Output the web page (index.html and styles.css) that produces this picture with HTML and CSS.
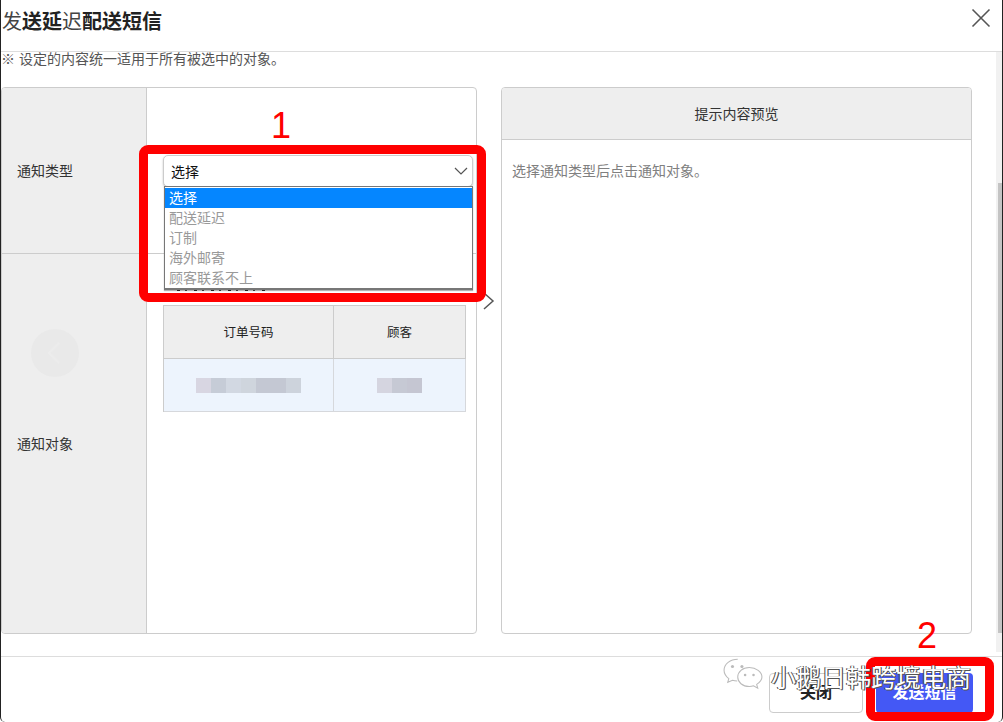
FILE: index.html
```html
<!DOCTYPE html>
<html lang="zh">
<head>
<meta charset="utf-8">
<title>发送延迟配送短信</title>
<link rel="stylesheet" href="styles.css">
</head>
<body>
<div class="modal">
  <header class="head">
    <h1 class="title"><span class="thin">发</span>送延<span class="thin">迟</span>配送短信</h1>
    <svg class="close" width="20" height="20" viewBox="0 0 20 20"><path d="M1.500 1.500L18.500 18.500M18.500 1.500L1.500 18.500" stroke="#555" stroke-width="1.600" fill="none"/></svg>
  </header>
  <main class="content">
    <p class="notice">※ 设定的内容统一适用于所有被选中的对象。</p>
    <div class="panels">
      <section class="form">
        <div class="row row-type">
          <div class="label">通知类型</div>
          <div class="cell cell-type">
            <div class="select">
              <span>选择</span>
              <svg width="14" height="8" viewBox="0 0 14 8"><path d="M1 1L7 7L13 1" stroke="#555" stroke-width="1.200" fill="none"/></svg>
            </div>
          </div>
        </div>
        <div class="row row-target">
          <div class="label label-target">通知对象</div>
          <div class="cell cell-target">
            <div class="count"><div class="glimpse"></div></div>
            <div class="table">
              <div class="th">订单号码</div>
              <div class="th">顾客</div>
              <div class="td"><span class="blur blur-a"><i></i><i></i><i></i><i></i><i></i><i></i><i></i></span></div>
              <div class="td"><span class="blur blur-b"><i></i><i></i><i></i></span></div>
            </div>
          </div>
        </div>
      </section>
      <div class="gutter">
        <svg width="14" height="20" viewBox="0 0 14 20"><path d="M2 2L11 10L2 18" stroke="#555" stroke-width="1.500" fill="none"/></svg>
      </div>
      <section class="preview">
        <div class="preview-head">提示内容预览</div>
        <p class="preview-body">选择通知类型后点击通知对象。</p>
      </section>
    </div>
    <div class="scrollbar"><div class="thumb"></div></div>
  </main>
  <footer class="foot">
    <button class="btn btn-close">关闭</button>
    <button class="btn btn-send">发送短信</button>
  </footer>
</div>

<div class="circle"><svg width="14" height="24" viewBox="0 0 14 24"><path d="M12 2L2 12L12 22" stroke="#ececec" stroke-width="2" fill="none"/></svg></div>
<ul class="dropdown">
  <li class="on">选择</li>
  <li>配送延迟</li>
  <li>订制</li>
  <li>海外邮寄</li>
  <li>顾客联系不上</li>
</ul>
<div class="mark mark-1"></div>
<div class="mark mark-2"></div>
<span class="num num-1">1</span>
<span class="num num-2">2</span>
<div class="wechat">
  <svg width="40" height="36" viewBox="0 0 38 34"><g fill="none" stroke="#bbb" stroke-width="1"><path d="M14 1C7 1 1 5.500 1 11.500C1 15 3 17.500 5.500 19.500L4.500 23L9 21C10.500 21.500 12 21.700 13.500 21.700"/><path d="M25 9C18.500 9 14 13 14 18C14 23 18.500 27 25 27C26.500 27 28 26.700 29 26.300L33 28.500L32 25C35 23 37 21 37 18C37 13 31.500 9 25 9Z"/></g><g fill="#bbb"><circle cx="9" cy="8" r="1.500"/><circle cx="18" cy="8" r="1.500"/><circle cx="21" cy="16" r="1.200"/><circle cx="29" cy="16" r="1.200"/></g></svg>
  <span class="wechat-name">小鹅日韩跨境电商</span>
</div>
</body>
</html>
```
FILE: styles.css
```css
* { box-sizing: border-box; }
html, body { margin: 0; height: 722px; overflow: hidden; }
body {
  position: relative;
  background: #fff;
  color: #111;
  font-family: "Liberation Sans", "Noto Sans CJK SC", sans-serif;
  font-size: 14px;
}
.modal {
  display: flex; flex-direction: column; width: 1003px; height: 722px;
  border-left: 1px solid #222; border-right: 1px solid #222;
  border-radius: 0 0 5px 5px;
}
.head {
  flex: none; height: 52px; display: flex; align-items: center; justify-content: space-between;
  padding: 0 11px 0 1px; border-bottom: 1px solid #ddd;
}
.title { margin: 0 0 8px; font-size: 20px; line-height: 26px; font-weight: 700; color: #222; }
.thin { font-weight: 400; color: #444; }
.close { margin-bottom: 16px; }
.content { flex: 1; position: relative; min-height: 0; }
.notice { margin: 0; height: 35px; font-size: 14px; line-height: 15px; color: #555; }
.panels { display: flex; width: 971px; height: 547px; }
.form {
  width: 476px; display: flex; flex-direction: column; overflow: hidden;
  border: 1px solid #ccc; border-radius: 4px;
}
.row { display: flex; }
.row-type { height: 166px; }
.row-target { flex: 1; }
.label {
  flex: none; width: 145px; background: #eee; border-right: 1px solid #ccc;
  display: flex; align-items: center; padding-left: 15px;
  font-size: 14px; color: #333;
}
.row-type .label { border-bottom: 1px solid #ccc; padding-bottom: 2px; }
.label-target { align-items: flex-start; padding-top: 179px; }
.cell { flex: 1; }
.cell-type { padding: 67px 3px 0 16px; border-bottom: 1px solid #ccc; }
.cell-target { padding: 24px 10px 0 16px; }
.select {
  height: 32px; display: flex; align-items: center; justify-content: space-between;
  padding: 0 4px 0 7px; border: 1px solid #ccc; border-radius: 5px;
  font-size: 14px; background: #fff;
  box-shadow: 0 1px 2px rgba(0, 0, 0, .25);
}
.count { height: 27px; padding: 11px 0 0 14px; }
.glimpse {
  width: 90px; height: 2px;
  background: repeating-linear-gradient(90deg, #333 0 3px, transparent 3px 8px, #555 8px 10px, transparent 10px 17px);
}
.table {
  display: grid; grid-template-columns: 170px 132px; grid-template-rows: 53px 53px;
  width: 303px; border-top: 1px solid #ccc; border-left: 1px solid #ccc;
}
.th, .td {
  display: flex; align-items: center; justify-content: center;
  border-right: 1px solid #ccc; border-bottom: 1px solid #ccc; font-size: 12.500px;
}
.th { background: #eee; color: #222; padding-bottom: 2px; }
.td { background: #edf4fd; border-color: #d6d8dc; }
.blur { display: flex; height: 15px; }
.blur i { width: 15px; height: 15px; background: #cdd3dc; }
.blur i:nth-child(1) { background: #d8d6e2; }
.blur i:nth-child(2) { background: #c6ccd7; }
.blur i:nth-child(3) { background: #d2d8e2; }
.blur i:nth-child(4) { background: #cfd5dd; }
.blur i:nth-child(5), .blur i:nth-child(6) { background: #c4c8d3; }
.blur-b i:nth-child(1) { background: #d5d5e0; }
.blur-b i:nth-child(2) { background: #c6c9d4; }
.blur-b i:nth-child(3) { background: #c5c6d2; }
.gutter { width: 24px; display: flex; justify-content: flex-end; padding: 204px 5px 0 0; }
.gutter svg { display: block; }
.preview { width: 471px; border: 1px solid #ccc; border-radius: 4px; overflow: hidden; }
.preview-head {
  height: 52px; display: flex; align-items: center; justify-content: center; padding-bottom: 2px;
  background: #eee; border-bottom: 1px solid #ccc; font-size: 14px; color: #333;
}
.preview-body { margin: 0; padding: 23px 10px 0; font-size: 14px; line-height: 16px; color: #808080; }
.scrollbar { position: absolute; top: 0; right: 0; width: 6px; height: 600px; background: #f1f1f1; }
.thumb { position: absolute; top: 131px; right: 0; width: 4px; height: 450px; background: #c4c4c4; }
.foot {
  flex: none; height: 66px; display: flex; justify-content: flex-end; align-items: flex-start;
  gap: 13px; padding: 16px 29px 0 0; border-top: 1px solid #ddd;
}
.btn {
  height: 40px; border-radius: 4px; padding: 0 0 4px;
  font: 700 16px "Liberation Sans", "Noto Sans CJK SC", sans-serif;
}
.btn-close { width: 94px; border: 1px solid #ccc; background: #fff; color: #222; }
.btn-send { width: 97px; border: 0; background: #4458f5; color: #fff; }
.circle {
  position: absolute; left: 31px; top: 329px; width: 48px; height: 48px; border-radius: 50%;
  background: #e9e9e9; display: flex; align-items: center; justify-content: center; padding-right: 2px;
}
.dropdown {
  position: absolute; left: 164px; top: 186px; width: 309px; height: 104px; margin: 0; padding: 1px 0 0;
  list-style: none; background: #fff; border: 1px solid #777; border-width: 1px 1px 2px;
  box-shadow: 0 1px 1px rgba(0, 0, 0, .3); font-size: 14px; line-height: 20px; color: #999;
}
.dropdown li { height: 20px; padding-left: 4px; }
.dropdown .on { background: #0586ff; color: #fff; }
.mark { position: absolute; border: 9px solid #f00; border-radius: 9px; }
.mark-1 { left: 139px; top: 145px; width: 347px; height: 157px; }
.mark-2 { left: 866px; top: 657px; width: 128px; height: 64px; }
.num { position: absolute; color: #f00; font-size: 36px; line-height: 40px; }
.num-1 { left: 271px; top: 106px; }
.num-2 { left: 917px; top: 616px; }
.wechat { position: absolute; left: 723px; top: 658px; display: flex; align-items: center; gap: 8px; }
.wechat-name {
  font-size: 25px; line-height: 36px; color: #fff;
  font-family: "Noto Sans CJK SC", sans-serif; font-weight: 400;
  text-shadow: -1px 0 0 #444, 1px 0 0 #555, 1px 1px 0 #555;
}
```
